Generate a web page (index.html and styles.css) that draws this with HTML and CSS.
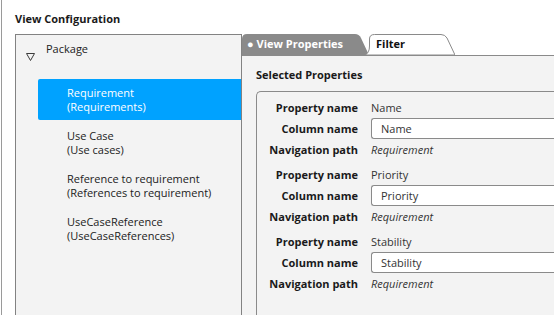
FILE: index.html
```html
<!DOCTYPE html>
<html lang="en">
  <head>
    <meta charset="UTF-8" />
    <meta name="viewport" content="width=device-width, initial-scale=1.0" />
    <title>View Configuration</title>
    <link rel="stylesheet" href="styles.css">
  </head>
  <body>
    <div class="window">
      <h1 class="title">View Configuration</h1>

      <div class="main">
        <div class="tree">
          <div class="tree-root">
            <svg class="toggle" width="9" height="8" viewBox="0 0 9 8">
              <polygon points="0.5,0.5 8.5,0.5 4.5,7.5" fill="none" stroke="#3c3c3c" stroke-width="1" />
            </svg>
            <span>Package</span>
          </div>

          <ul class="tree-items">
            <li class="tree-item selected">Requirement<br>(Requirements)</li>
            <li class="tree-item">Use Case<br>(Use cases)</li>
            <li class="tree-item">Reference to requirement<br>(References to requirement)</li>
            <li class="tree-item">UseCaseReference<br>(UseCaseReferences)</li>
          </ul>
        </div>

        <div class="editor">
          <div class="tabs">
            <div class="tab active">
              <svg class="tab-shape" width="126" height="21" viewBox="0 0 126 21">
                <path d="M0,21 L0,5 Q0,0 5,0 L113,0 Q117,0 119,4 L127,21 Z" fill="#8a8a8a" />
              </svg>
              <span class="tab-label">&#9679; View Properties</span>
            </div>
            <div class="tab">
              <svg class="tab-shape" width="90" height="21" viewBox="0 0 90 21">
                <path d="M0,21 Q4.5,19 4.5,12 L4.5,5 Q4.5,0.5 9.5,0.5 L76,0.5 Q80,0.5 82,4 L90,21 Z" fill="#ffffff" stroke="#8a8a8a" stroke-width="1" />
              </svg>
              <span class="tab-label">Filter</span>
            </div>
          </div>

          <div class="tab-body">
            <div class="section-title">Selected Properties</div>

            <div class="props">
              <div class="prop">
                <div class="prop-label">Property name</div>
                <div class="prop-value">Name</div>
                <div class="prop-label">Column name</div>
                <div class="prop-input">Name</div>
                <div class="prop-label">Navigation path</div>
                <div class="prop-path">Requirement</div>
              </div>

              <div class="prop">
                <div class="prop-label">Property name</div>
                <div class="prop-value">Priority</div>
                <div class="prop-label">Column name</div>
                <div class="prop-input">Priority</div>
                <div class="prop-label">Navigation path</div>
                <div class="prop-path">Requirement</div>
              </div>

              <div class="prop">
                <div class="prop-label">Property name</div>
                <div class="prop-value">Stability</div>
                <div class="prop-label">Column name</div>
                <div class="prop-input">Stability</div>
                <div class="prop-label">Navigation path</div>
                <div class="prop-path">Requirement</div>
              </div>
            </div>
          </div>
        </div>
      </div>
    </div>
  </body>
</html>
```

FILE: styles.css
```css
html,
body {
  margin: 0;
  padding: 0;
  height: 100%;
  overflow: hidden;
}
body {
  font-family: 'Segoe UI', 'Open Sans', sans-serif;
  font-size: 11px;
  color: #222;
  background-color: #fff;
}
.window {
  margin-left: 1px;
  height: 100%;
  border-left: 1px solid #9a9a9a;
  display: flex;
  flex-direction: column;
}
.title {
  font-size: 11px;
  font-weight: bold;
  line-height: 16px;
  margin: 11px 0 7px 13px;
  color: #1a1a1a;
}
.main {
  flex: 1;
  display: flex;
  min-height: 0;
}
.tree {
  width: 225px;
  margin-left: 13px;
  border: 1px solid #828282;
  border-bottom: none;
  background-color: #f3f3f3;
}
.tree-root {
  display: flex;
  align-items: flex-start;
  padding-top: 6px;
  line-height: 16px;
}
.toggle {
  margin: 12px 0 0 10px;
}
.tree-root span {
  margin-left: 11px;
}
.tree-items {
  list-style: none;
  margin: 18px 0 0 22px;
  padding: 0;
}
.tree-item {
  line-height: 14px;
  padding: 7px 0 6px 29px;
  margin-bottom: 2px;
  border-radius: 2px 0 0 2px;
}
.tree-item.selected {
  background-color: #00a2ff;
  color: #fff;
}
.editor {
  flex: 1;
  display: flex;
  flex-direction: column;
  min-width: 0;
}
.tabs {
  display: flex;
  height: 21px;
}
.tab {
  position: relative;
  height: 21px;
  font-weight: bold;
  line-height: 20px;
}
.tab.active {
  width: 126px;
  color: #fff;
}
.tab:not(.active) {
  width: 90px;
  margin-left: -3px;
  color: #111;
}
.tab-shape {
  position: absolute;
  left: 0;
  top: 0;
}
.tab-label {
  position: relative;
  padding-left: 5px;
}
.tab:not(.active) .tab-label {
  padding-left: 11px;
}
.tab-body {
  flex: 1;
  display: flex;
  flex-direction: column;
  min-height: 0;
  background-color: #f3f3f3;
  border-top: 1px solid #8a8a8a;
  padding: 11px 0 0 14px;
}
.section-title {
  font-weight: bold;
  line-height: 16px;
  color: #1a1a1a;
}
.props {
  flex: 1;
  margin-top: 8px;
  border-top: 1px solid #8a8a8a;
  border-left: 1px solid #8a8a8a;
  border-top-left-radius: 5px;
  padding-top: 5px;
  display: flex;
  flex-direction: column;
  gap: 4px;
}
.prop {
  display: grid;
  grid-template-columns: 101px 1fr;
  grid-auto-rows: 21px;
  column-gap: 13px;
  align-items: center;
}
.prop-label {
  font-weight: bold;
  text-align: right;
  color: #1a1a1a;
}
.prop-value,
.prop-path {
  color: #333;
}
.prop-path {
  font-style: italic;
}
.prop-input {
  height: 21px;
  box-sizing: border-box;
  background-color: #fff;
  border: 1px solid #8a8a8a;
  border-right: none;
  border-radius: 3px 0 0 3px;
  padding-left: 9px;
  line-height: 19px;
  color: #333;
}
```
